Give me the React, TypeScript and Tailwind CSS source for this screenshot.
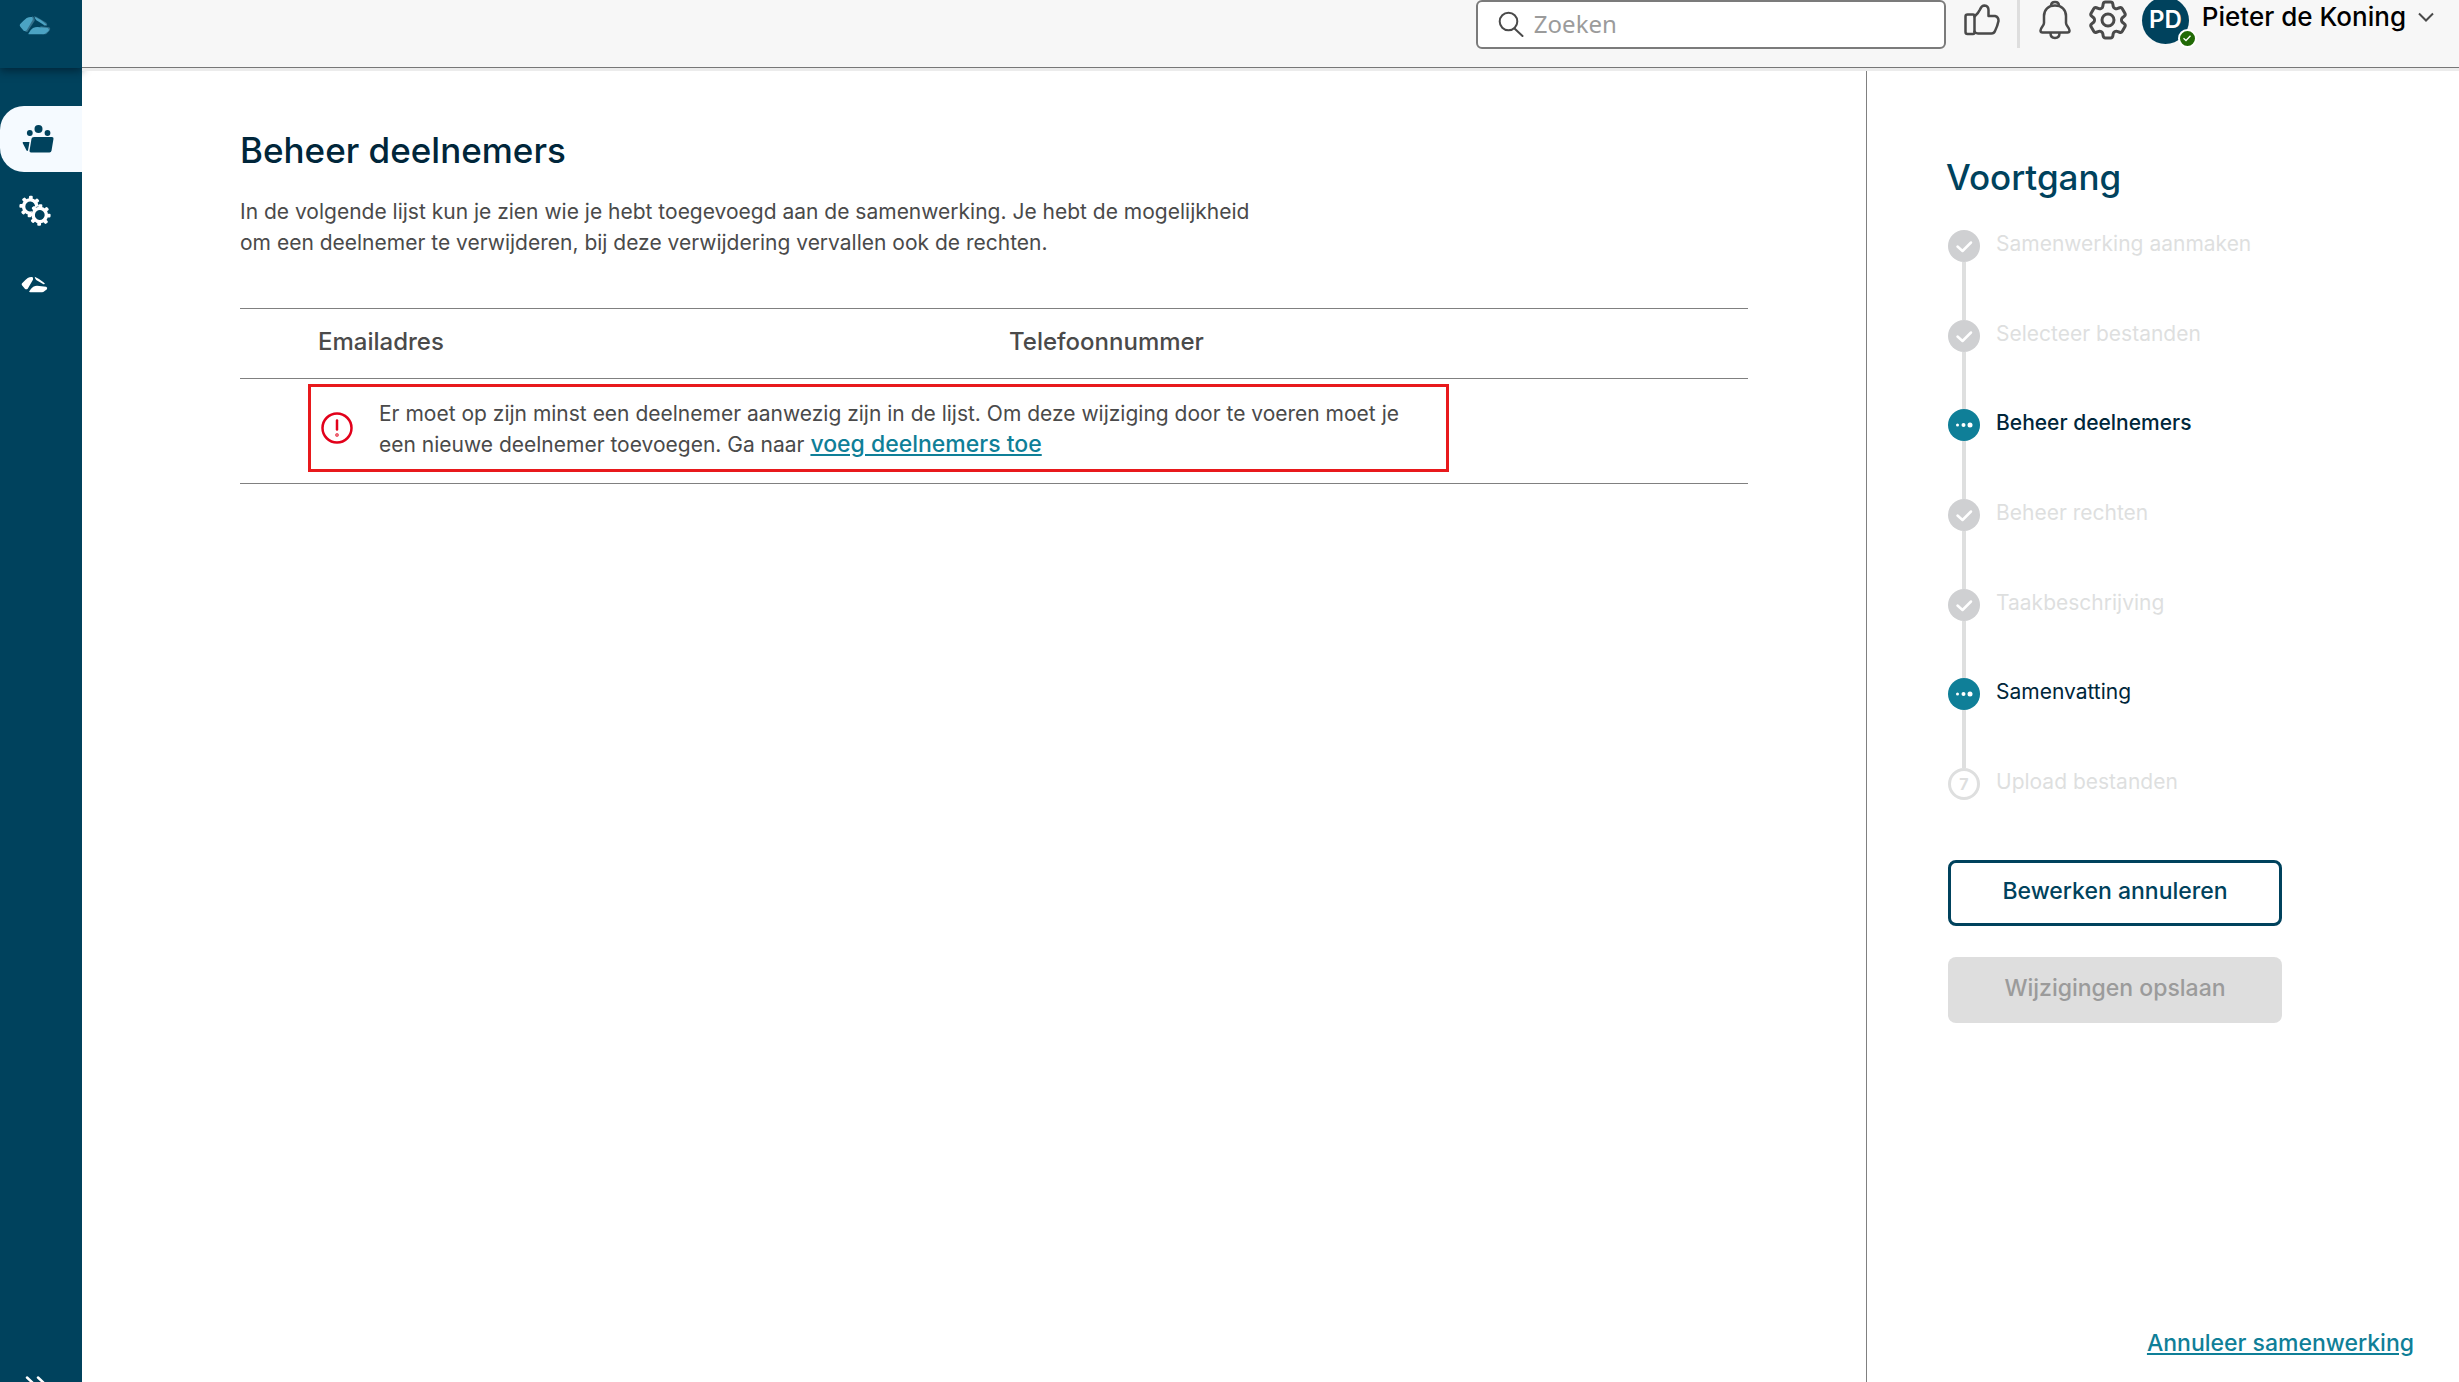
import React from 'react';
import { HiOutlineCog6Tooth } from 'react-icons/hi2';

type StepState = 'done' | 'active' | 'todo';

const steps: { label: string; state: StepState; emphasis?: boolean }[] = [
  { label: 'Samenwerking aanmaken', state: 'done' },
  { label: 'Selecteer bestanden', state: 'done' },
  { label: 'Beheer deelnemers', state: 'active', emphasis: true },
  { label: 'Beheer rechten', state: 'done' },
  { label: 'Taakbeschrijving', state: 'done' },
  { label: 'Samenvatting', state: 'active' },
  { label: 'Upload bestanden', state: 'todo' },
];

function LogoMark({ tinted = false, className }: { tinted?: boolean; className: string }) {
  return (
    <svg viewBox="56 44 96 60" className={className} aria-hidden="true">
      {tinted && (
        <g fill="#33708a">
          <path d="M96 48q8 3 7 13l-22 34q-4 1-8-3z" />
          <path d="M100 48l8 1 30 18q4 5 2 9l-8 0z" />
          <path d="M120 78l27 3q4 4 2 8l-10 11q-4 3-14 1z" />
        </g>
      )}
      <g fill={tinted ? '#4ba3c3' : '#ffffff'} strokeLinejoin="round">
        <path d="M59 72q12-13 20-19 8-4 16-3 4 4 2 9L79 90q-4 4-9 1L60 79q-3-3-1-7z" />
        <path d="M103 49q18 8 30 19 6 5 5 6l-5 1-25-15q-5-6-5-11z" />
        <path d="M84 100q6-12 14-17 7-3 13-3l31 3q6 3 3 9l-9 7q-3 3-8 3H88q-4 0-4-2z" />
      </g>
    </svg>
  );
}

function PeopleFolder() {
  return (
    <svg viewBox="0 0 32 28" className="h-[28px] w-8" fill="#00425d" aria-hidden="true">
      <circle cx="16.500" cy="4" r="4" />
      <circle cx="7.800" cy="8" r="2.900" />
      <circle cx="25.500" cy="8" r="2.900" />
      <path d="M12 12h18q1.700 0 1.500 1.700l-2 12Q29.200 27.500 27.500 27.500H9q-1.700 0-1.500-1.700l2-12Q9.900 12 12 12z" />
      <path d="M1.200 17h6.300L6 25.500q-.700.800-1.500 0L.700 18q-.2-1 .5-1z" />
    </svg>
  );
}

const toothAngles = [0, 45, 90, 135, 180, 225, 270, 315];

function Gear({ x, y }: { x: number; y: number }) {
  return (
    <g transform={`translate(${x} ${y}) rotate(4)`}>
      <circle r="8.700" fill="#00425d" />
      <circle r="6.600" fill="none" stroke="#fff" strokeWidth="3.400" />
      {toothAngles.map((a) => (
        <rect key={a} x="-1.900" y="-10.800" width="3.800" height="4.500" rx="1.200" fill="#fff" transform={`rotate(${a})`} />
      ))}
    </g>
  );
}

function Gears() {
  return (
    <svg viewBox="0 0 32 32" className="size-8" aria-hidden="true">
      <Gear x={11.200} y={11.500} />
      <Gear x={20.800} y={20} />
    </svg>
  );
}

function Search() {
  return (
    <svg viewBox="0 0 26 26" className="size-[26px]" fill="none" stroke="#4a4a4a" strokeWidth="2" strokeLinecap="round" aria-hidden="true">
      <circle cx="10.500" cy="10.500" r="8.800" />
      <path d="M16.500 17.500 24.500 25" />
    </svg>
  );
}

function ThumbUp() {
  return (
    <svg viewBox="0 0 36 32" className="h-8 w-9" fill="none" stroke="#4a4a4a" strokeWidth="2.500" strokeLinejoin="round" strokeLinecap="round" aria-hidden="true">
      <path d="M3.500 10.500h5.500q1.500 0 1.500 1.500v16q0 2-1.500 2H3.500q-2 0-2-2V12.500q0-2 2-2z" />
      <path d="M10.500 12.500q4-3.500 5.500-7 1.500-4 4.500-4 4 .5 4 4.500v6h6.500q3.700 1 3.500 5-1 5-3.500 10-1 2.500-3.500 2.500H14q-2.500 0-3.500-2" />
    </svg>
  );
}

function Bell() {
  return (
    <svg viewBox="0 0 32 40" className="h-10 w-8" fill="none" stroke="#4a4a4a" strokeWidth="2.500" strokeLinejoin="round" aria-hidden="true">
      <path d="M12 6q0-4 4-4t4 4" />
      <path d="M16 5.500c-6.500 0-11 4-11 10.500v7c0 3-3.500 4.500-3.500 7.500 0 1.200.8 2 2 2h25c1.200 0 2-.8 2-2 0-3-3.500-4.500-3.500-7.500v-7c0-6.500-4.500-10.500-11-10.500z" />
      <path d="M11.500 33q0 5 4.500 5t4.500-5" />
    </svg>
  );
}

function StepBadge({ state, index }: { state: StepState; index: number }) {
  if (state === 'todo') {
    return (
      <span className="flex size-8 shrink-0 items-center justify-center rounded-full border-3 border-[#dedfdf] text-base font-bold text-[#dedfdf]">
        {index}
      </span>
    );
  }
  if (state === 'done') {
    return (
      <span className="size-8 shrink-0 rounded-full bg-[#cfd0d2]">
        <svg viewBox="0 0 32 32" className="size-8" fill="none" stroke="#fff" strokeWidth="2.500" strokeLinecap="round" strokeLinejoin="round" aria-hidden="true">
          <path d="M9.500 16.500 14.500 21 23 12.500" />
        </svg>
      </span>
    );
  }
  return (
    <span className="size-8 shrink-0 rounded-full bg-[#0f7f98]">
      <svg viewBox="0 0 32 32" className="size-8" fill="#fff" aria-hidden="true">
        <circle cx="9.500" cy="16" r="1.500" />
        <circle cx="15.500" cy="16" r="2" />
        <circle cx="22" cy="16" r="2.500" />
      </svg>
    </span>
  );
}

export default function App() {
  return (
    <div className="flex h-screen overflow-hidden bg-white font-[Inter,sans-serif] text-[21px] leading-[31px] text-[#4a4a4a]">
      <nav className="flex w-[82px] shrink-0 flex-col bg-[#00425d]" aria-label="Hoofdmenu">
        <a href="#home" aria-label="Home" className="flex h-[68px] items-start pt-[15px] pl-[19px] shadow-[0_3px_8px_rgba(0,20,35,0.6)]">
          <LogoMark tinted className="h-5 w-8" />
        </a>
        <a href="#samenwerkingen" aria-label="Samenwerkingen" className="mt-[38px] flex h-[66px] items-center rounded-l-[24px] bg-[#f5faff] pl-[22px]">
          <PeopleFolder />
        </a>
        <a href="#instellingen" aria-label="Instellingen" className="flex h-[78px] items-center pl-[19px]">
          <Gears />
        </a>
        <a href="#overzicht" aria-label="Overzicht" className="flex h-[68px] items-center pl-[21px]">
          <LogoMark className="h-[18px] w-7" />
        </a>
        <button type="button" aria-label="Menu uitklappen" className="mt-auto h-2 overflow-hidden pl-6">
          <svg viewBox="0 0 24 20" className="h-5 w-6" fill="none" stroke="#fff" strokeWidth="2.500" strokeLinecap="round" aria-hidden="true">
            <path d="M3 3.500l8 7.500-8 7.500M14 3.500l8 7.500-8 7.500" />
          </svg>
        </button>
      </nav>

      <div className="flex min-w-0 flex-1 flex-col">
        <header className="flex h-[71px] shrink-0 flex-col border-b-3 border-[#ececec]">
          <div className="flex flex-1 items-start justify-end border-b border-[#777777] bg-[#f7f7f7] pr-[25px]">
            <label className="flex h-[49px] w-[470px] items-center gap-2.5 rounded-md border-2 border-[#7b7b7b] bg-white pb-0.5 pl-5">
              <Search />
              <input
                type="search"
                aria-label="Zoeken"
                placeholder="Zoeken"
                className="min-w-0 flex-1 bg-transparent font-['Noto_Sans',sans-serif] text-2xl outline-none placeholder:text-[#9b9b9b]"
              />
            </label>
            <div className="flex h-10 items-center">
              <button type="button" aria-label="Feedback" className="ml-[18px]">
                <ThumbUp />
              </button>
              <span className="ml-[17px] h-12 w-[3px] self-start bg-[#dedede]" />
              <button type="button" aria-label="Meldingen" className="ml-[19px]">
                <Bell />
              </button>
              <button type="button" aria-label="Instellingen" className="ml-[13px]">
                <HiOutlineCog6Tooth className="size-12 text-[#4a4a4a]" />
              </button>
              <button type="button" className="ml-[10px] flex h-[47px] items-center text-[26px] leading-9 font-medium text-black">
                <span className="relative flex size-[47px] items-center justify-center rounded-full bg-[#00425d] text-2xl font-semibold text-white">
                  PD
                  <span className="absolute -right-2 -bottom-1 flex size-[19px] items-center justify-center rounded-full border-2 border-white bg-[#216a06]">
                    <svg viewBox="0 0 12 12" className="size-3" fill="none" stroke="#fff" strokeWidth="1.300" aria-hidden="true">
                      <path d="M2.500 6.200 5 8.500 9.500 3.800" />
                    </svg>
                  </span>
                </span>
                <span className="flex items-center gap-3 pb-1.5 pl-[13px]">
                  Pieter de Koning
                  <svg viewBox="0 0 16 10" className="h-2.5 w-4" fill="none" stroke="#4a4a4a" strokeWidth="2" aria-hidden="true">
                    <path d="M1 1.500l7 7 7-7" />
                  </svg>
                </span>
              </button>
            </div>
          </div>
        </header>

        <div className="flex min-h-0 flex-1">
          <main className="min-w-0 flex-1 pt-[54px] pr-[118px] pl-[158px]">
            <h1 className="text-[35px] leading-[50px] font-medium text-[#00263a]">Beheer deelnemers</h1>
            <p className="mt-[21px] max-w-[1030px]">
              In de volgende lijst kun je zien wie je hebt toegevoegd aan de samenwerking. Je hebt de mogelijkheid om een
              deelnemer te verwijderen, bij deze verwijdering vervallen ook de rechten.
            </p>
            <table className="mt-[50px] w-full table-fixed border-collapse border-y border-[#808080] text-left">
              <thead>
                <tr className="h-[70px] border-b border-[#808080] text-2xl">
                  <th scope="col" className="w-[51%] pb-1 pl-[78px] font-medium">Emailadres</th>
                  <th scope="col" className="pb-1 font-medium">Telefoonnummer</th>
                </tr>
              </thead>
              <tbody>
                <tr>
                  <td colSpan={2} className="pt-[5px] pb-[11px] pl-[68px]">
                    <div role="alert" className="flex h-[88px] max-w-[1141px] items-center border-3 border-[#e8191c] pr-6 pl-[10px]">
                      <svg viewBox="0 0 32 32" className="size-8 shrink-0" fill="none" stroke="#e2001a" strokeWidth="2.500" strokeLinecap="round" aria-hidden="true">
                        <circle cx="16" cy="16" r="14.500" />
                        <path d="M16 8.500v9" />
                        <circle cx="16" cy="23" r=".5" />
                      </svg>
                      <p className="pt-0.5 pl-[26px]">
                        Er moet op zijn minst een deelnemer aanwezig zijn in de lijst. Om deze wijziging door te voeren moet je
                        een nieuwe deelnemer toevoegen. Ga naar{' '}
                        <a href="#voeg-deelnemers-toe" className="text-[23px] font-medium text-[#0f7f98] underline decoration-2 underline-offset-2">
                          voeg deelnemers toe
                        </a>
                      </p>
                    </div>
                  </td>
                </tr>
              </tbody>
            </table>
          </main>

          <aside className="flex w-[593px] shrink-0 flex-col border-l border-[#808080] pt-[81px] pl-[79px]">
            <h2 className="text-[35px] leading-[50px] font-medium text-[#00425d]">Voortgang</h2>
            <ol className="mt-[28px] ml-0.5 flex min-h-[570px] flex-col">
              {steps.map((step, i) => (
                <li key={step.label} className="flex gap-4 not-last:flex-1">
                  <div className="flex flex-col items-center">
                    <StepBadge state={step.state} index={i + 1} />
                    {i < steps.length - 1 && <span className="w-1 flex-1 bg-[#dedfdf]" />}
                  </div>
                  <span
                    className={
                      step.emphasis
                        ? 'leading-7 font-medium text-[#00263a]'
                        : step.state === 'active'
                          ? 'leading-7 text-[#00263a]'
                          : 'leading-7 text-[#dedfdf]'
                    }
                  >
                    {step.label}
                  </span>
                </li>
              ))}
            </ol>
            <div className="mt-[60px] ml-0.5 flex w-[334px] flex-col gap-[31px]">
              <button type="button" className="h-[66px] rounded-lg border-3 border-[#00425d] pb-1 text-[23px] font-medium text-[#00425d]">
                Bewerken annuleren
              </button>
              <button type="button" disabled className="h-[66px] rounded-lg bg-[#dedede] pb-1 text-[23px] font-medium text-[#9b9b9b]">
                Wijzigingen opslaan
              </button>
            </div>
            <a
              href="#annuleer"
              className="mt-auto mr-[45px] mb-[23px] self-end text-[23px] font-medium text-[#0f7f98] underline decoration-2 underline-offset-2"
            >
              Annuleer samenwerking
            </a>
          </aside>
        </div>
      </div>
    </div>
  );
}
